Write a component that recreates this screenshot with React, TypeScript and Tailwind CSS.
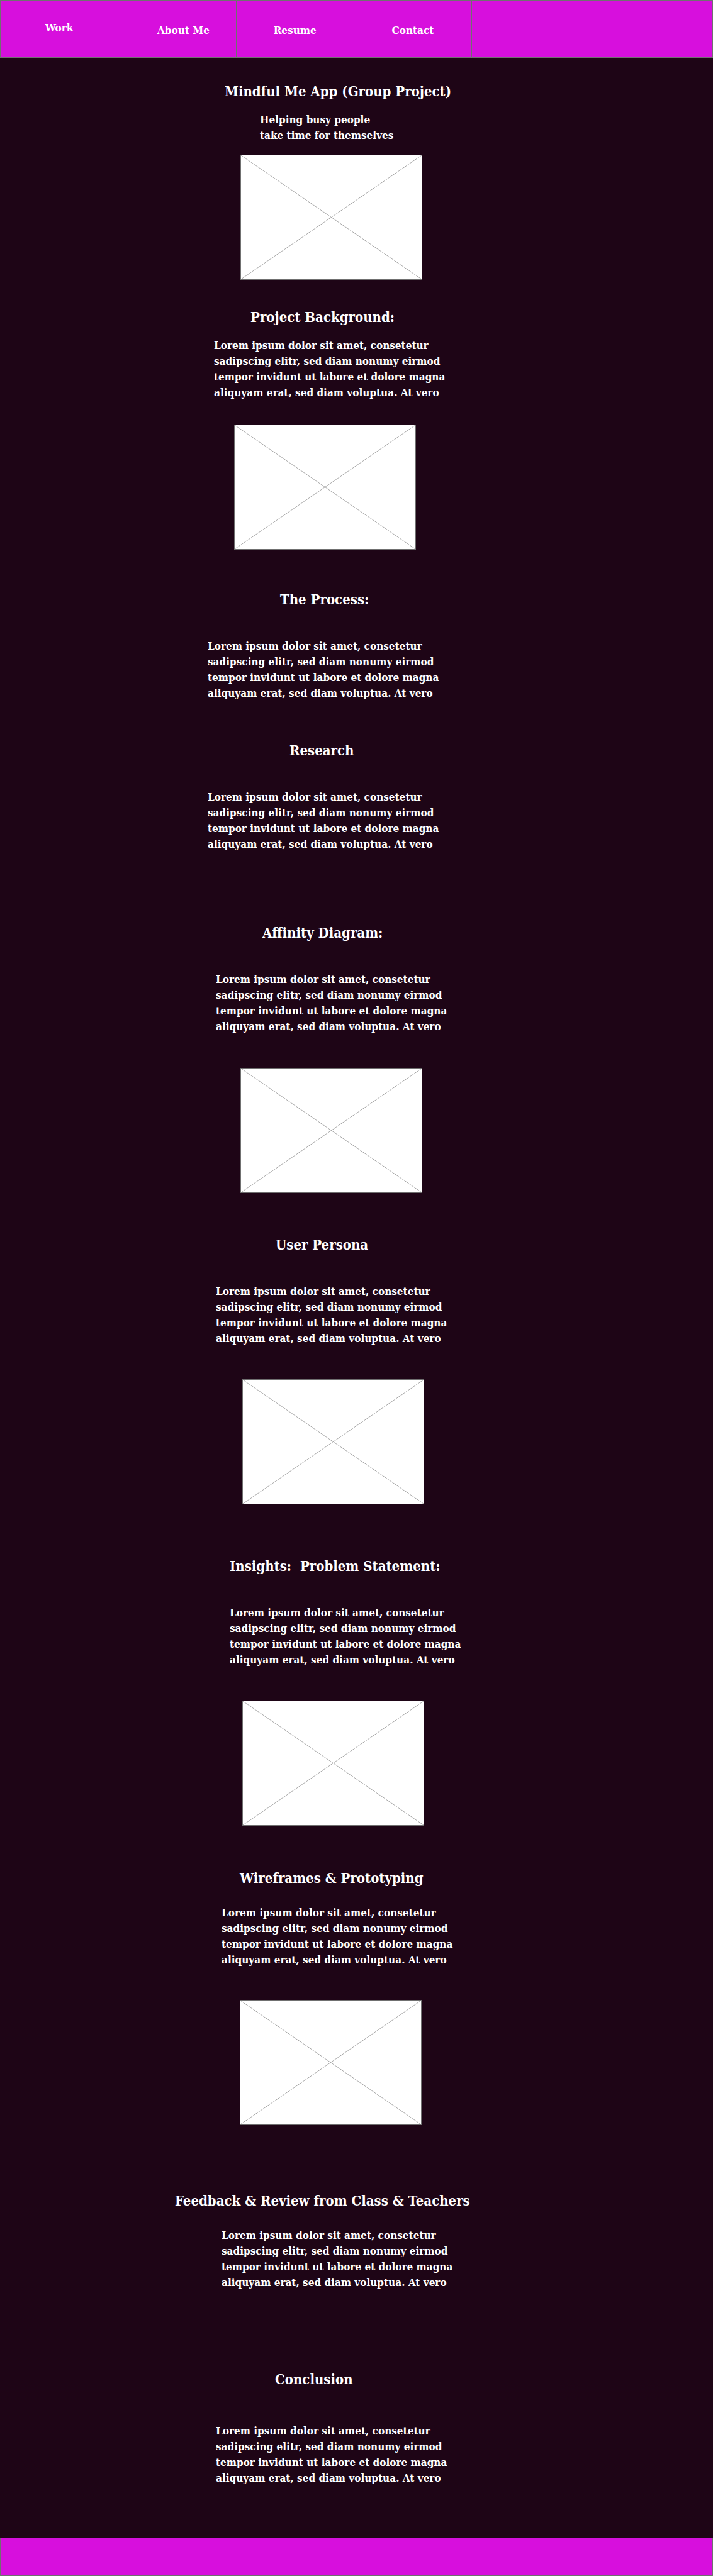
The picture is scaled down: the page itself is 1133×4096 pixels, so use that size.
const LOREM = [
  "Lorem ipsum dolor sit amet, consetetur",
  "sadipscing elitr, sed diam nonumy eirmod",
  "tempor invidunt ut labore et dolore magna",
  "aliquyam erat, sed diam voluptua. At vero",
];

const NAV = [
  { label: "Work", href: "#work", place: "pb-1" },
  { label: "About Me", href: "#about", place: "pt-1 pl-5" },
  { label: "Resume", href: "#resume", place: "pt-1" },
  { label: "Contact", href: "#contact", place: "pt-1" },
];

const SECTIONS = [
  { title: "Project Background:", head: "mt-[43px] ml-[120px]", text: "mt-[17px] ml-[62px]", image: "mt-[38px] ml-[94px]" },
  { title: "The Process:", head: "mt-[63px] ml-[167px]", text: "mt-[46px] ml-[52px]" },
  { title: "Research", head: "mt-[62px] ml-[182px]", text: "mt-[46px] ml-[52px]" },
  { title: "Affinity Diagram:", head: "mt-[112px] ml-[139px]", text: "mt-[46px] ml-[65px]", image: "mt-[53px] ml-[104px]" },
  { title: "User Persona", head: "mt-[66px] ml-[160px]", text: "mt-[46px] ml-[65px]", image: "mt-[52px] ml-[107px]" },
  { title: "Insights:\u00a0 Problem Statement:", head: "mt-[82px] ml-[87px]", text: "mt-[46px] ml-[87px]", image: "mt-[52px] ml-[107px]" },
  { title: "Wireframes & Prototyping", head: "mt-[67px] ml-[103px]", text: "mt-[27px] ml-[74px]", image: "mt-[51px] ml-[103px]" },
  { title: "Feedback & Review from Class & Teachers", head: "mt-[104px] ml-0", text: "mt-[27px] ml-[74px]" },
  { title: "Conclusion", head: "mt-[125px] ml-[159px]", text: "mt-[54px] ml-[65px]" },
];

function Lines({ lines, className }: { lines: string[]; className: string }) {
  return (
    <p className={`text-[17px] leading-[25px] whitespace-nowrap ${className}`}>
      {lines.map((line) => (
        <span key={line} className="block">
          {line}
        </span>
      ))}
    </p>
  );
}

function Placeholder({ className }: { className: string }) {
  return (
    <div className={`h-[199px] w-[289px] border border-[#707070] bg-white ${className}`}>
      <svg
        role="img"
        aria-label="Image placeholder"
        viewBox="0 0 287 197"
        preserveAspectRatio="none"
        className="block h-full w-full"
        fill="none"
        stroke="#a8a8a8"
      >
        <path d="M0 0 287 197M287 0 0 197" />
      </svg>
    </div>
  );
}

export default function App() {
  return (
    <div className="min-h-screen bg-[#1e0516] font-['DejaVu_Serif_Condensed','DejaVu_Serif',serif] font-bold text-white">
      <header className="border border-[#707070] bg-[#d70fdd]">
        <nav aria-label="Main">
          <ul className="flex h-[90px]">
            {NAV.map((item) => (
              <li key={item.label} className="w-[16.56%] border-r border-[#707070]">
                <a
                  href={item.href}
                  className={`flex h-full items-center justify-center text-[17px] leading-[25px] whitespace-nowrap ${item.place}`}
                >
                  {item.label}
                </a>
              </li>
            ))}
          </ul>
        </nav>
      </header>

      <main className="mx-auto max-w-[577px] pb-[82px]">
        <h1 className="mt-[37px] ml-[79px] text-[22px] leading-8 whitespace-nowrap">Mindful Me App (Group Project)</h1>
        <Lines lines={["Helping busy people", "take time for themselves"]} className="mt-[17px] ml-[135px]" />
        <Placeholder className="mt-[18px] ml-[104px]" />

        {SECTIONS.map((section) => (
          <section key={section.title}>
            <h2 className={`text-[22px] leading-8 whitespace-nowrap ${section.head}`}>{section.title}</h2>
            <Lines lines={LOREM} className={section.text} />
            {section.image && <Placeholder className={section.image} />}
          </section>
        ))}
      </main>

      <footer className="h-[61px] border border-[#707070] bg-[#d70fdd]" />
    </div>
  );
}
